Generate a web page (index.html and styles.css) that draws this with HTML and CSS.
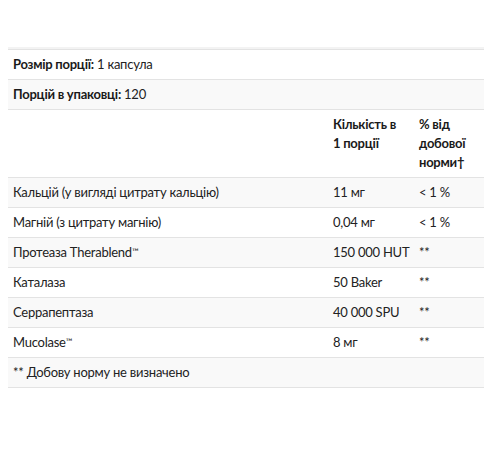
FILE: index.html
```html
<!DOCTYPE html>
<html lang="uk">
<head>
<meta charset="utf-8">
<link rel="stylesheet" href="styles.css">
</head>
<body>
<div class="wrap">
<table class="facts">
  <colgroup>
    <col class="c1"><col class="c2"><col class="c3">
  </colgroup>
  <tbody>
    <tr><td colspan="3"><b>Розмір порції:</b> 1 капсула</td></tr>
    <tr class="alt"><td colspan="3"><b>Порцій в упаковці:</b> 120</td></tr>
    <tr class="head"><td></td><td><b>Кількість в<br>1 порції</b></td><td><b>% від<br>добової<br>норми†</b></td></tr>
    <tr class="alt"><td>Кальцій (у вигляді цитрату кальцію)</td><td>11 мг</td><td>&lt; 1 %</td></tr>
    <tr><td>Магній (з цитрату магнію)</td><td>0,04 мг</td><td>&lt; 1 %</td></tr>
    <tr class="alt"><td>Протеаза Therablend<span class="tm">™</span></td><td>150 000 HUT</td><td>**</td></tr>
    <tr><td>Каталаза</td><td>50 Baker</td><td>**</td></tr>
    <tr class="alt"><td>Серрапептаза</td><td>40 000 SPU</td><td>**</td></tr>
    <tr><td>Mucolase<span class="tm">™</span></td><td>8 мг</td><td>**</td></tr>
    <tr class="alt"><td colspan="3">** Добову норму не визначено</td></tr>
  </tbody>
</table>
</div>
</body>
</html>
```
FILE: styles.css
```css
html, body {
  margin: 0;
  padding: 0;
  background: #fff;
}
body {
  padding: 47px 8px 0 8px;
  font-family: Lato, "Noto Sans", sans-serif;
  font-size: 13px;
  letter-spacing: -0.25px;
  color: #222;
}
.wrap {
  width: 476px;
  border-top: 2px solid #f3f3f3;
}
.facts {
  width: 476px;
  border-collapse: collapse;
  table-layout: fixed;
}
.c1 { width: 320px; }
.c2 { width: 86px; }
.c3 { width: 70px; }
.facts td {
  padding: 5px 5px;
  line-height: 19px;
  vertical-align: top;
  border-top: 1px solid #e3e3e3;
  border-bottom: 1px solid #e3e3e3;
  text-align: left;
  white-space: nowrap;
}
.facts b {
  font-weight: 700;
  color: #1a1a1a;
}
.tm {
  font-size: 9px;
  line-height: 0;
  position: relative;
  top: -2px;
}
.alt td {
  background: #f9f9f9;
}
```
